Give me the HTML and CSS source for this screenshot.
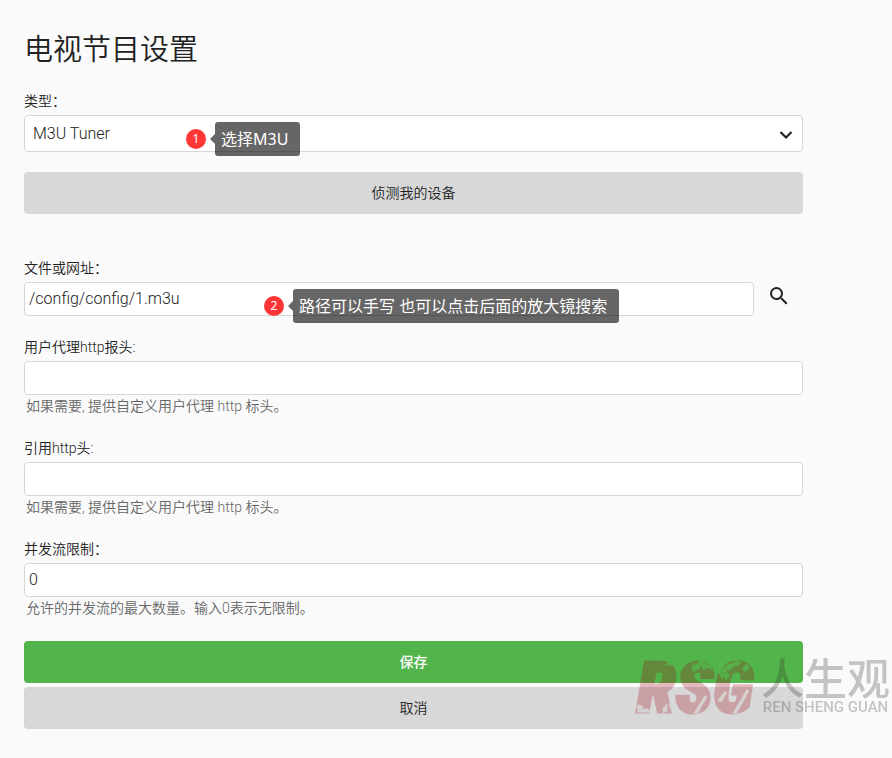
FILE: index.html
```
<!DOCTYPE html>
<html lang="zh-CN">
<head>
    <meta charset="UTF-8">
    <meta name="viewport" content="width=device-width, initial-scale=1.0">
    <title>电视节目设置</title>
    <link rel="stylesheet" href="styles.css">
</head>
<body>
<form class="page">
    <h1>电视节目设置</h1>

    <!-- Tuner type -->
    <div class="field field-type">
        <label for="type">类型：</label>
        <div class="control">
            <select id="type">
                <option>M3U Tuner</option>
            </select>
            <svg class="chevron" viewBox="0 0 24 24"><path d="M6.5 9l5.5 5.5L17.5 9"/></svg>
            <div class="callout callout-type">
                <span class="badge">1</span>
                <span class="bubble">选择M3U</span>
            </div>
        </div>
    </div>
    <button type="button" class="btn btn-detect">侦测我的设备</button>

    <!-- Tuner settings -->
    <div class="field">
        <label for="path">文件或网址：</label>
        <div class="control path-row">
            <input type="text" id="path" value="/config/config/1.m3u">
            <button type="button" class="btn-search" aria-label="搜索">
                <svg viewBox="0 0 24 24"><path d="M15.5 14h-.79l-.28-.27A6.47 6.47 0 0 0 16 9.5 6.5 6.5 0 1 0 9.5 16c1.61 0 3.09-.59 4.23-1.57l.27.28v.79l5 4.99L20.49 19l-4.99-5zm-6 0C7.01 14 5 11.99 5 9.5S7.01 5 9.5 5 14 7.01 14 9.5 11.99 14 9.5 14z"/></svg>
            </button>
            <div class="callout callout-path">
                <span class="badge">2</span>
                <span class="bubble">路径可以手写 也可以点击后面的放大镜搜索</span>
            </div>
        </div>
    </div>
    <div class="field">
        <label for="agent">用户代理http报头:</label>
        <input type="text" id="agent">
        <div class="hint">如果需要, 提供自定义用户代理 http 标头。</div>
    </div>
    <div class="field">
        <label for="referer">引用http头:</label>
        <input type="text" id="referer">
        <div class="hint">如果需要, 提供自定义用户代理 http 标头。</div>
    </div>
    <div class="field">
        <label for="limit">并发流限制：</label>
        <input type="text" id="limit" value="0">
        <div class="hint">允许的并发流的最大数量。输入0表示无限制。</div>
    </div>

    <div class="actions">
        <button type="submit" class="btn btn-save">保存</button>
        <button type="button" class="btn">取消</button>
    </div>
</form>

<!-- Watermark -->
<div class="watermark">
    <svg class="wm-logo" viewBox="0 0 120 60">
        <mask id="wear" maskUnits="userSpaceOnUse" x="-5" y="-5" width="130" height="70">
            <rect x="-5" y="-5" width="130" height="70" fill="#fff"/>
            <path d="M56 11l2-2 2 1 2-3 1 2-2 3-2 0-2 2zM63 6l3-1 1 2-3 1zM66 10l4-2 0 2-3 2zM70 4l3 0 1 1-3 1zM72 11l3-1-1 2zM83 17l2-4 1 2 2-3 1 2-3 3-1 3zM91 10l3-1 1 2-3 2zM88 20l2-2 1 2-2 2zM97 8l3-2 2 1-3 2zM107 12l3-2 1 2-3 2zM31 8l2-2 1 2zM2 50l2 1-1 1-2-1zM2 54l8 0 1 1-9 0zM27 53l2-2 0 3-2 1zM34 50l2 1-1 2zM111 34l-12 22-1 0zM69 40l-9 16-1 0zM89 36l-5 8-1 0z" fill="#000"/>
        </mask>
        <text x="0" y="56" mask="url(#wear)">RSG</text>
    </svg>
    <div class="wm-name">
        <div class="wm-cn">人生观</div>
        <div class="wm-en">REN SHENG GUAN</div>
    </div>
</div>
</body>
</html>
```
FILE: styles.css
```
* {
    box-sizing: border-box;
}

body {
    margin: 0;
    position: relative;
    background-color: #fafafa;
    color: #222;
    font-family: Roboto, "Noto Sans CJK SC", sans-serif;
    font-size: 14px;
    font-weight: 350;
    line-height: 20px;
}

.page {
    padding: 28px 89px 29px 24px;
}

h1 {
    margin: 0 0 19px;
    font-size: 29px;
    font-weight: 350;
    line-height: 44px;
}

.field {
    margin-bottom: 21px;
}

.field-type {
    margin-bottom: 20px;
}

label {
    display: block;
    margin-bottom: 4px;
}

.control {
    position: relative;
}

input,
select {
    display: block;
    width: 100%;
    height: 34px;
    padding: 0 4px 2px;
    border: 1px solid #d6d6d6;
    border-radius: 4px;
    background-color: #fff;
    color: #222;
    font-family: inherit;
    font-size: 16px;
    font-weight: 350;
}

select {
    height: 37px;
    padding: 0 32px 0 8px;
    appearance: none;
}

.chevron {
    position: absolute;
    top: 8px;
    right: 5px;
    width: 24px;
    height: 24px;
    fill: none;
    stroke: #222;
    stroke-width: 2.2;
    pointer-events: none;
}

.hint {
    padding-left: 2px;
    color: #666;
    line-height: 22px;
}

.path-row {
    display: flex;
    align-items: flex-start;
}

.path-row input {
    flex: 1;
}

.btn-search {
    display: flex;
    align-items: center;
    justify-content: center;
    width: 49px;
    height: 28px;
    padding: 0;
    border: none;
    background: none;
    cursor: pointer;
}

.btn-search svg {
    width: 24px;
    height: 24px;
    fill: #222;
}

/* Numbered notes over the fields */
.callout {
    position: absolute;
    top: 7px;
    display: flex;
    align-items: center;
    gap: 9px;
}

.callout-type {
    left: 162px;
}

.callout-path {
    left: 240px;
}

.badge {
    width: 20px;
    height: 20px;
    border-radius: 50%;
    background-color: #ff3636;
    color: #fff;
    font-family: "Noto Sans", sans-serif;
    font-size: 12px;
    font-weight: 400;
    text-align: center;
}

.bubble {
    position: relative;
    padding: 0 12px 0 6px;
    border-radius: 3px;
    background-color: rgba(0, 0, 0, 0.6);
    color: #fff;
    font-family: "Noto Sans", "Noto Sans CJK SC", sans-serif;
    font-size: 16px;
    font-weight: 400;
    line-height: 34px;
    white-space: nowrap;
}

.bubble::before {
    content: "";
    position: absolute;
    top: 12px;
    left: -5px;
    border: 5px solid transparent;
    border-left: none;
    border-right-color: rgba(0, 0, 0, 0.6);
}

.btn {
    display: block;
    width: 100%;
    height: 42px;
    padding: 0 0 2px;
    border: none;
    border-radius: 4px;
    background-color: #d8d8d8;
    color: #222;
    font-family: inherit;
    font-size: 14px;
    font-weight: 350;
    cursor: pointer;
}

.btn-detect {
    margin-bottom: 44px;
}

.btn-save {
    background-color: #52b54b;
    color: #fff;
    font-weight: 500;
}

.actions {
    display: flex;
    flex-direction: column;
    gap: 4px;
    margin-top: 22px;
}

.watermark {
    position: absolute;
    right: 2px;
    bottom: 42px;
    display: flex;
    align-items: flex-end;
    gap: 4px;
    opacity: 0.25;
    pointer-events: none;
}

.wm-logo {
    width: 120px;
    height: 60px;
    overflow: visible;
    fill: #a00010;
    stroke: #a00010;
    stroke-width: 3;
    font-family: "Roboto Condensed", Roboto, sans-serif;
    font-size: 70px;
    font-style: italic;
    font-weight: 900;
}

.wm-name {
    color: #2c2020;
    text-align: center;
}

.wm-cn {
    font-size: 43px;
    font-weight: 500;
    line-height: 36px;
}

.wm-en {
    font-family: Roboto, sans-serif;
    font-size: 15px;
    font-weight: 500;
    line-height: 18px;
}
```
